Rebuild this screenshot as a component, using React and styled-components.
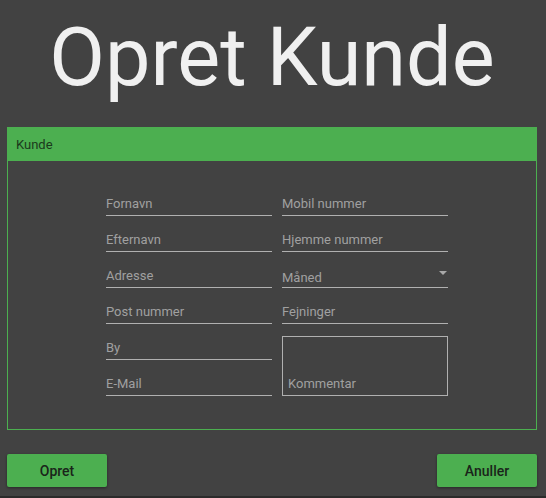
import React from 'react';
import styled, { createGlobalStyle } from 'styled-components';

const GlobalStyle = createGlobalStyle`
  html {
    background: #2b2b2b;
  }
  body {
    margin: 0;
    font-family: Roboto, "Liberation Sans", sans-serif;
  }
`;

const Page = styled.div`
  background: #424242;
  height: 496px;
  padding: 0 9px 0 7px;
  box-sizing: border-box;
  display: flex;
  flex-direction: column;
`;

const Title = styled.h1`
  margin: 0;
  padding-top: 17px;
  height: 127px;
  box-sizing: border-box;
  font-size: 81px;
  line-height: 81px;
  font-weight: 400;
  color: #f0f0f0;
  text-align: center;
`;

const Panel = styled.section`
  border: 1px solid #4caf50;
  border-top: none;
`;

const PanelHeader = styled.div`
  background: #4caf50;
  height: 34px;
  padding-left: 8px;
  display: flex;
  align-items: center;
  font-size: 13px;
  color: #1b3a1c;
`;

const Form = styled.div`
  display: grid;
  grid-template-columns: 166px 166px;
  grid-auto-rows: 36px;
  column-gap: 10px;
  padding: 19px 0 33px 98px;
`;

const Field = styled.label`
  position: relative;
  display: flex;
  align-items: flex-end;
  border-bottom: 1px solid #b0b0b0;
  padding-bottom: ${p => (p.$low ? 2 : 4)}px;
  box-sizing: border-box;
  font-size: 13px;
  line-height: 15px;
  color: #a0a0a0;
`;

const Arrow = styled.span`
  position: absolute;
  right: 1px;
  bottom: 12px;
  width: 0;
  height: 0;
  border-left: 4px solid transparent;
  border-right: 4px solid transparent;
  border-top: 4px solid #a8a8a8;
`;

const CommentBox = styled.label`
  grid-column: 2;
  grid-row: 5 / span 2;
  margin-top: 12px;
  border: 1px solid #b0b0b0;
  display: flex;
  align-items: flex-end;
  padding: 0 0 4px 5px;
  font-size: 13px;
  line-height: 15px;
  color: #a0a0a0;
`;

const Actions = styled.div`
  display: flex;
  justify-content: space-between;
  margin-top: 24px;
`;

const Button = styled.button`
  width: 100px;
  height: 33px;
  border: none;
  border-radius: 2px;
  background: #4caf50;
  color: #1a241a;
  font-family: Roboto, "Liberation Sans", sans-serif;
  font-size: 14px;
  font-weight: 500;
  box-shadow: 0 1px 3px rgba(0, 0, 0, 0.4);
  cursor: pointer;
`;

const left = ['Fornavn', 'Efternavn', 'Adresse', 'Post nummer', 'By', 'E-Mail'];
const right = ['Mobil nummer', 'Hjemme nummer', 'Måned', 'Fejninger'];

export default function App() {
  return (
    <>
      <GlobalStyle />
      <Page>
        <Title>Opret Kunde</Title>
        <Panel>
          <PanelHeader>Kunde</PanelHeader>
          <Form>
            {left.map((label, i) => (
              <Field key={label} style={{ gridColumn: 1, gridRow: i + 1 }}>
                {label}
              </Field>
            ))}
            {right.map((label, i) => (
              <Field
                key={label}
                $low={label === 'Måned'}
                style={{ gridColumn: 2, gridRow: i + 1 }}
              >
                {label}
                {label === 'Måned' && <Arrow />}
              </Field>
            ))}
            <CommentBox>Kommentar</CommentBox>
          </Form>
        </Panel>
        <Actions>
          <Button>Opret</Button>
          <Button>Anuller</Button>
        </Actions>
      </Page>
    </>
  );
}
